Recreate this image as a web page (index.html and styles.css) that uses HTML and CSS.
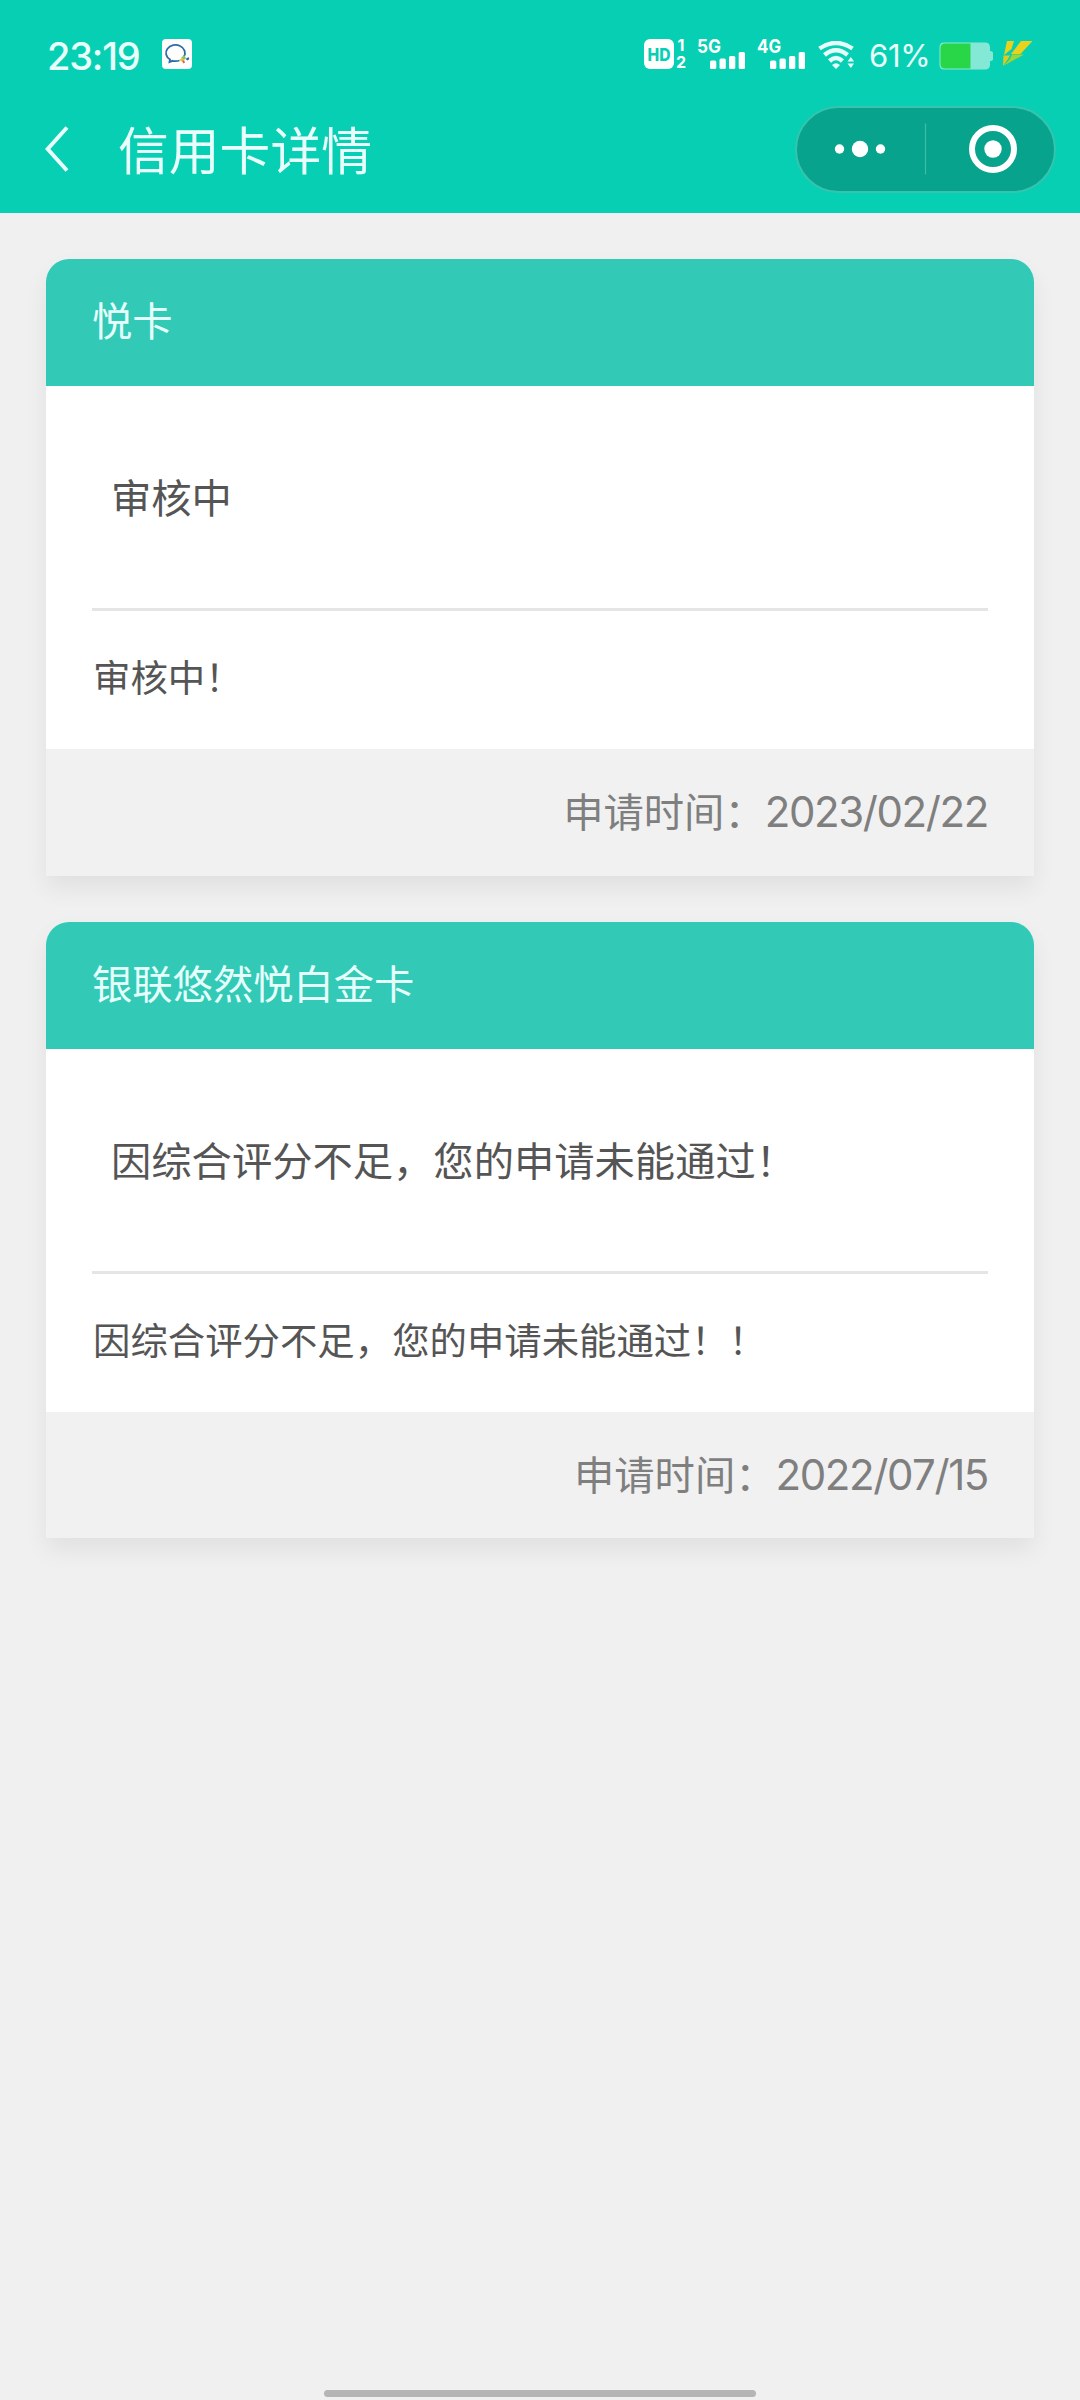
FILE: index.html
```html
<!DOCTYPE html>
<html lang="zh-CN">
<head>
<meta charset="utf-8">
<title>信用卡详情</title>
<link rel="stylesheet" href="styles.css">
</head>
<body>
<header class="header">
  <div class="status">
    <span class="clock">23:19</span>
    <svg class="app-icon" width="30" height="30" viewBox="0 0 30 30">
      <rect width="30" height="30" rx="4" fill="#fff"/>
      <path d="M22 17.500A9.500 8 0 1 0 8 20.500L7.500 23L10.500 21.800Q14 22.700 17.500 21.500" fill="none" stroke="#2e6ba5" stroke-width="1.800"/>
      <path d="M22 16l2 3-2 2-3-2z" fill="#8bc06b"/><path d="M17 21l3-2 2 2-2 1.500z" fill="#f2c230"/>
      <path d="M20 22l2-1 1 2.500-1.500 1z" fill="#e2603e"/><path d="M23.500 20l3-2 .8 2-1.800 1.500z" fill="#2e6ba5"/>
    </svg>
    <div class="indicators">
      <svg class="hd" width="44" height="36" viewBox="0 -3 44 36">
        <rect width="30" height="30" rx="6" fill="#fff"/>
        <text class="hd-text" x="15" y="21.500" text-anchor="middle" textLength="23" lengthAdjust="spacingAndGlyphs">HD</text>
        <text class="sim-text" x="33.500" y="12">1</text>
        <text class="sim-text" x="32" y="29.300">2</text>
      </svg>
      <svg class="signal" width="50" height="36" viewBox="0 -3 50 36">
        <text class="net-text" x="0" y="14.300" textLength="24" lengthAdjust="spacingAndGlyphs">5G</text>
        <g fill="#fff"><rect x="13" y="21.500" width="6.300" height="8.500" rx="1.500"/><rect x="22.500" y="19.500" width="6.300" height="10.500" rx="1.500"/><rect x="32" y="17" width="6.300" height="13" rx="1.500"/><rect x="41.700" y="13" width="6.300" height="17" rx="1.500"/></g>
      </svg>
      <svg class="signal second" width="50" height="36" viewBox="0 -3 50 36">
        <text class="net-text" x="0" y="14.300" textLength="24" lengthAdjust="spacingAndGlyphs">4G</text>
        <g fill="#fff"><rect x="13" y="21.500" width="6.300" height="8.500" rx="1.500"/><rect x="22.500" y="19.500" width="6.300" height="10.500" rx="1.500"/><rect x="32" y="17" width="6.300" height="13" rx="1.500"/><rect x="41.700" y="13" width="6.300" height="17" rx="1.500"/></g>
      </svg>
      <svg class="wifi" width="38" height="28" viewBox="0 0 38 28">
        <g fill="none" stroke="#e6fffa" stroke-width="4.500">
          <path d="M1.500 7.500Q18 -3.500 34.500 7.500"/><path d="M6.500 14Q18 4.500 29.500 14"/><path d="M11.500 20Q18 14 24.500 20"/>
        </g>
        <path d="M14 24Q18 20.500 22 24L18 28z" fill="#e6fffa"/>
        <path d="M29.500 20.500l3.300-4.500 3.300 4.500zM29.500 22.500h6.600l-3.300 4.500z" fill="#e6fffa"/>
      </svg>
      <span class="percent">61%</span>
      <svg class="battery" width="54" height="28" viewBox="0 0 54 28">
        <path d="M5 .5H46Q51 .5 51 5.500V9Q54 9 54 11V17Q54 19 51 19V22.500Q51 27.500 46 27.500H5Q.5 27.500 .5 22.500V5.500Q.5 .5 5 .5z" fill="#84e8d7"/>
        <path d="M31.500 1.500H6Q1.500 1.500 1.500 6V22Q1.500 26.500 6 26.500H31.500z" fill="#29d648"/>
      </svg>
      <svg class="bolt" width="31" height="26" viewBox="0 0 31 26">
        <path d="M5 0H12L9.500 8L2 14z" fill="#e9d21c"/>
        <path d="M19 0H30.500L18.500 13H9z" fill="#e9d21c"/>
        <path d="M1.500 14.500H8L6 18L1 25z" fill="#dfca20"/>
        <path d="M10 13.500H22L1 25L8 18z" fill="#a2d431"/>
      </svg>
    </div>
  </div>
  <nav class="nav">
    <svg class="back" width="24" height="48" viewBox="0 0 24 48"><path d="M22 2.500L2.700 24L22 45.500" fill="none" stroke="#e8fffb" stroke-width="4"/></svg>
    <h1 class="title">信用卡详情</h1>
    <div class="capsule">
      <svg width="257" height="82" viewBox="0 0 257 82">
        <g fill="#fff"><circle cx="42.500" cy="41" r="4.700"/><circle cx="63" cy="41" r="8.200"/><circle cx="83.500" cy="41" r="4.700"/><circle cx="196" cy="41" r="8.700"/></g>
        <circle cx="196" cy="41" r="21" fill="none" stroke="#fff" stroke-width="6"/>
        <path d="M128.500 15.500V66.500" stroke="#3fbba8" stroke-width="1.200"/>
      </svg>
    </div>
  </nav>
</header>
<main class="cards">
  <section class="card">
    <h2 class="card-head">悦卡</h2>
    <p class="state">审核中</p>
    <p class="detail">审核中！</p>
    <div class="card-foot"><span>申请时间：</span><span class="date">2023/02/22</span></div>
  </section>
  <section class="card">
    <h2 class="card-head">银联悠然悦白金卡</h2>
    <p class="state">因综合评分不足，您的申请未能通过！</p>
    <p class="detail">因综合评分不足，您的申请未能通过！！</p>
    <div class="card-foot"><span>申请时间：</span><span class="date">2022/07/15</span></div>
  </section>
</main>
<footer class="home"><div class="home-bar"></div></footer>
</body>
</html>
```
FILE: styles.css
```css
* { box-sizing: border-box; }
body {
  margin: 0;
  width: 1080px;
  height: 2400px;
  display: flex;
  flex-direction: column;
  background: #f0f0f0;
  font-family: "Noto Sans CJK SC", sans-serif;
  overflow: hidden;
}
h1, h2, p { margin: 0; font-weight: 400; }
svg { display: block; flex: none; }

.header { height: 213px; background: #07cfb3; color: #e8fffb; }
.status { height: 106px; display: flex; padding: 0 47px; }
.clock {
  width: 115px;
  margin-top: 31px;
  font: 500 38px/50px Inter, sans-serif;
  letter-spacing: -1.2px;
  white-space: nowrap;
}
.app-icon { margin-top: 39px; }
.indicators { display: flex; margin-left: auto; }
.hd, .signal { margin-top: 36px; }
.signal { margin-left: 9px; }
.second { margin-left: 10px; }
.hd-text { font: 800 17px Inter, sans-serif; fill: #07cfb3; }
.sim-text { font: 700 16px Inter, sans-serif; fill: #fff; }
.net-text { font: 700 19px Inter, sans-serif; fill: #fff; }
.wifi { margin: 41px 0 0 11px; }
.percent {
  width: 70px;
  margin-top: 36px;
  padding-left: 13px;
  font: 400 31px/40px Inter, sans-serif;
  letter-spacing: -.3px;
  white-space: nowrap;
}
.battery { margin: 42px 0 0 13px; }
.bolt { margin: 41px 0 0 9px; }

.nav { display: flex; height: 86px; align-items: center; padding: 0 24px 0 45px; }
.title { margin-left: 49px; padding-bottom: 3px; font-size: 50.800px; line-height: 82px; }
.capsule {
  width: 261px;
  height: 87px;
  margin-left: auto;
  border: 2px solid #35c4ae;
  border-radius: 44px;
  background: #07a38d;
}

.cards { display: flex; flex-direction: column; gap: 46px; padding: 46px 46px 0; flex: 1; }
.card {
  height: 616.500px;
  border-radius: 23px 23px 0 0;
  background: #fff;
  box-shadow: 0 12px 24px rgba(0, 0, 0, .065);
  color: #555;
}
.card-head {
  height: 127px;
  padding-left: 46px;
  border-radius: 23px 23px 0 0;
  background: #32c9b7;
  color: #e5fffb;
  font-size: 40.300px;
  line-height: 120px;
}
.state {
  height: 225px;
  margin: 0 46px;
  padding-left: 19px;
  border-bottom: 3px solid #e5e5e5;
  font-size: 40.300px;
  line-height: 219px;
}
.detail { height: 138px; margin: 0 46px; padding-left: 1px; font-size: 37.400px; line-height: 130px; }
.card-foot {
  height: 126.500px;
  padding-right: 46px;
  display: flex;
  justify-content: flex-end;
  background: #f1f1f1;
  color: #7f7f7f;
  font-size: 40.300px;
  line-height: 121px;
}
.date {
  font-family: Inter, sans-serif;
  font-size: 42px;
  line-height: 126px;
  letter-spacing: -1.4px;
  font-kerning: none;
}

.home { height: 13px; display: flex; justify-content: center; align-items: flex-start; margin-top: auto; }
.home-bar { width: 432px; height: 7px; margin-top: 3px; border-radius: 4px; background: #b5b5b5; }
```
